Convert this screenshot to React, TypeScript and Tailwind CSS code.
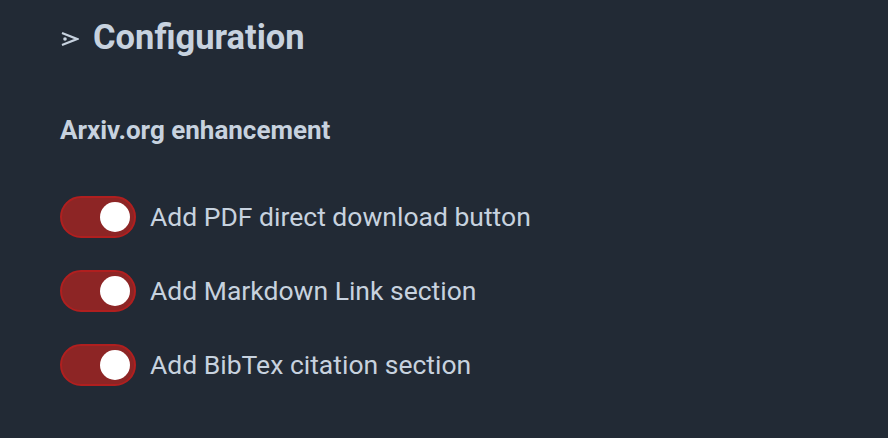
import React, { useState } from "react";

const Toggle = ({ on, onChange }: { on: boolean; onChange: () => void }) => (
  <button
    onClick={onChange}
    className={`relative flex items-center w-[76px] h-[42px] rounded-full border-2 px-[4px] ${
      on ? "bg-[#8d2525] border-[#b01f1f] justify-end" : "bg-[#4b5563] border-[#6b7280] justify-start"
    }`}
  >
    <span className="block w-[30px] h-[30px] rounded-full bg-white" />
  </button>
);

const items = [
  "Add PDF direct download button",
  "Add Markdown Link section",
  "Add BibTex citation section",
];

export default function App() {
  const [state, setState] = useState([true, true, true]);
  return (
    <div
      className="w-[888px] h-[438px] bg-[#222a35] text-[#c7d2df] pl-[60px] pt-[14px]"
      style={{ fontFamily: "Roboto, 'Liberation Sans', sans-serif" }}
    >
      <div className="flex items-center gap-[14px]">
        <svg width="19" height="16" viewBox="0 0 19 16" className="mt-[4px]">
          <path d="M2 2 L17 8 L2 14" fill="none" stroke="#c7d2df" strokeWidth="2.2" strokeLinejoin="miter" />
          <circle cx="5" cy="8" r="1.8" fill="#c7d2df" />
        </svg>
        <h1 className="text-[34.5px] font-bold leading-[46px]">Configuration</h1>
      </div>
      <h2 className="mt-[55px] text-[26px] font-bold leading-[30px]">Arxiv.org enhancement</h2>
      <div className="mt-[51px] flex flex-col gap-[32px]">
        {items.map((t, i) => (
          <div key={t} className="flex items-center gap-[14px]">
            <Toggle
              on={state[i]}
              onChange={() => setState((s) => s.map((v, j) => (j === i ? !v : v)))}
            />
            <span className="text-[26.5px]">{t}</span>
          </div>
        ))}
      </div>
    </div>
  );
}
